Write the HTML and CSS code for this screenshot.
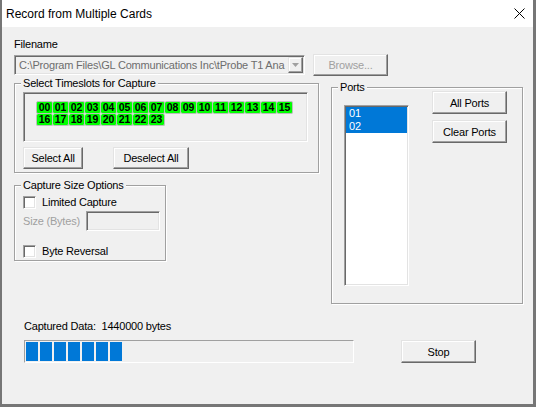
FILE: index.html
```html
<!DOCTYPE html>
<html lang="en">

<head>
    <meta charset="UTF-8">
    <meta name="viewport" content="width=device-width, initial-scale=1.0">
    <title>Record from Multiple Cards</title>
    <link rel="stylesheet" href="styles.css">
</head>

<body>
    <div class="window">
        <div class="titlebar">
            <span class="title">Record from Multiple Cards</span>
            <svg class="close" width="11" height="11" viewBox="0 0 11 11">
                <path d="M0.5 0.5L10.5 10.5M10.5 0.5L0.5 10.5" stroke="#000" stroke-width="1" fill="none" />
            </svg>
        </div>

        <div class="dialog">
            <div class="field-label">Filename</div>
            <div class="file-row">
                <div class="combo sunken">
                    <span class="combo-text">C:\Program Files\GL Communications Inc\tProbe T1 Ana</span>
                    <span class="combo-btn raised">
                        <svg width="7" height="4" viewBox="0 0 7 4">
                            <path d="M0 0H7L3.5 4Z" fill="#a0a0a0" />
                        </svg>
                    </span>
                </div>
                <button class="btn browse" disabled>Browse...</button>
            </div>

            <div class="middle">
                <div class="left-col">
                    <div class="group timeslots">
                        <span class="group-title">Select Timeslots for Capture</span>
                        <div class="slot-box sunken">
                            <div class="slots">
                                <span class="slot">00</span><span class="slot">01</span><span class="slot">02</span><span class="slot">03</span>
                                <span class="slot">04</span><span class="slot">05</span><span class="slot">06</span><span class="slot">07</span>
                                <span class="slot">08</span><span class="slot">09</span><span class="slot">10</span><span class="slot">11</span>
                                <span class="slot">12</span><span class="slot">13</span><span class="slot">14</span><span class="slot">15</span>
                                <span class="slot">16</span><span class="slot">17</span><span class="slot">18</span><span class="slot">19</span>
                                <span class="slot">20</span><span class="slot">21</span><span class="slot">22</span><span class="slot">23</span>
                            </div>
                        </div>
                        <div class="slot-buttons">
                            <button class="btn select-all">Select All</button>
                            <button class="btn deselect-all">Deselect All</button>
                        </div>
                    </div>

                    <div class="group size-options">
                        <span class="group-title">Capture Size Options</span>
                        <label class="check-row"><span class="checkbox sunken"></span>Limited Capture</label>
                        <div class="size-row">
                            <span class="muted">Size (Bytes)</span>
                            <span class="textbox sunken"></span>
                        </div>
                        <label class="check-row byte-rev"><span class="checkbox sunken"></span>Byte Reversal</label>
                    </div>
                </div>

                <div class="group ports">
                    <span class="group-title">Ports</span>
                    <div class="listbox sunken">
                        <div class="item selected">01</div>
                        <div class="item selected">02</div>
                    </div>
                    <div class="port-buttons">
                        <button class="btn port-btn">All Ports</button>
                        <button class="btn port-btn">Clear Ports</button>
                    </div>
                </div>
            </div>

            <div class="captured">Captured Data:&nbsp; 1440000 bytes</div>
            <div class="progress-row">
                <div class="progress">
                    <span class="block"></span><span class="block"></span><span class="block"></span>
                    <span class="block"></span><span class="block"></span><span class="block"></span>
                    <span class="block"></span>
                </div>
                <button class="btn stop">Stop</button>
            </div>
        </div>
    </div>
</body>

</html>
```

FILE: styles.css
```css
body {
    margin: 0;
    font-family: "Liberation Sans", Arial, sans-serif;
    font-size: 11px;
    letter-spacing: -0.2px;
    color: #000;
}

.window {
    box-sizing: border-box;
    width: 536px;
    height: 407px;
    background-color: #f0f0f0;
    border-left: 2px solid #767676;
    border-right: 3px solid #767676;
    border-bottom: 3px solid #767676;
    overflow: hidden;
}

.titlebar {
    height: 27px;
    background-color: #fff;
    display: flex;
    align-items: center;
    justify-content: space-between;
    padding: 0 8px 0 4px;
}

.title {
    font-size: 12px;
    letter-spacing: 0;
}

.close {
    display: block;
}

.dialog {
    padding: 11px 0 0 12px;
}

.field-label {
    line-height: 13px;
}

/* 3d borders */
.sunken {
    box-sizing: border-box;
    border: 1px solid;
    border-color: #a0a0a0 #fff #fff #a0a0a0;
    box-shadow: inset 1px 1px 0 #696969, inset -1px -1px 0 #e3e3e3;
}

.raised {
    box-sizing: border-box;
    border: 1px solid;
    border-color: #e3e3e3 #696969 #696969 #e3e3e3;
    box-shadow: inset -1px -1px 0 #a0a0a0, inset 1px 1px 0 #fff;
    background-color: #f0f0f0;
}

.btn {
    box-sizing: border-box;
    font: inherit;
    letter-spacing: inherit;
    color: #000;
    background-color: #f0f0f0;
    border: 1px solid;
    border-color: #e3e3e3 #696969 #696969 #e3e3e3;
    box-shadow: inset -1px -1px 0 #a0a0a0, inset 1px 1px 0 #fff;
    padding: 0;
    margin: 0;
}

.file-row {
    display: flex;
    align-items: flex-start;
    margin-top: 3px;
}

.combo {
    width: 291px;
    height: 20px;
    margin-top: 1px;
    padding: 1px;
    display: flex;
    align-items: center;
    background-color: #f0f0f0;
}

.combo-text {
    flex: 1;
    padding-left: 3px;
    color: #6d6d6d;
    white-space: nowrap;
}

.combo-btn {
    width: 15px;
    height: 16px;
    display: flex;
    align-items: center;
    justify-content: center;
    flex-shrink: 0;
}

.combo-btn svg {
    display: block;
}

.browse {
    width: 75px;
    height: 22px;
    margin-left: 8px;
    color: #a0a0a0;
}

.middle {
    display: flex;
    align-items: flex-start;
}

.left-col {
    width: 305px;
}

.group {
    position: relative;
    box-sizing: border-box;
    border: 1px solid #a0a0a0;
    box-shadow: inset 1px 1px 0 #fff, 1px 1px 0 #fff;
}

.group-title {
    position: absolute;
    top: -7px;
    left: 6px;
    padding: 0 2px;
    line-height: 13px;
    background-color: #f0f0f0;
}

.timeslots {
    margin-top: 7px;
    height: 90px;
    padding: 8px 0 0 8px;
}

.slot-box {
    width: 285px;
    height: 50px;
    padding: 8px 0 0 12px;
}

.slots {
    display: flex;
    flex-wrap: wrap;
    width: 260px;
}

.slot {
    box-sizing: border-box;
    width: 16px;
    height: 12px;
    border-right: 1px solid #bdbdbd;
    border-bottom: 1px solid #bdbdbd;
    border-radius: 2px;
    background-color: #00ff00;
    font-size: 10.5px;
    font-weight: bold;
    line-height: 11px;
    letter-spacing: -0.1px;
    text-align: center;
}

.slot:nth-child(-n+16) {
    height: 13px;
    border-top: 1px solid #bdbdbd;
}

.slot:nth-child(16n+1) {
    width: 17px;
    border-left: 1px solid #bdbdbd;
}

.slot-buttons {
    display: flex;
    margin-top: 5px;
}

.select-all {
    width: 60px;
    height: 22px;
}

.deselect-all {
    width: 76px;
    height: 22px;
    margin-left: 30px;
}

.size-options {
    margin-top: 12px;
    width: 152px;
    height: 76px;
    padding: 10px 0 0 8px;
}

.check-row {
    display: flex;
    align-items: center;
    height: 13px;
    line-height: 13px;
}

.checkbox {
    width: 13px;
    height: 13px;
    margin-right: 6px;
    background-color: #fff;
}

.size-row {
    display: flex;
    align-items: center;
    height: 20px;
    margin-top: 2px;
}

.muted {
    width: 63px;
    color: #a0a0a0;
}

.textbox {
    width: 74px;
    height: 20px;
    background-color: #f0f0f0;
}

.byte-rev {
    margin-top: 14px;
}

.ports {
    margin: 11px 0 0 12px;
    width: 192px;
    height: 217px;
    padding: 3px 0 0 12px;
    display: flex;
    align-items: flex-start;
}

.listbox {
    width: 65px;
    height: 181px;
    margin-top: 14px;
    padding: 1px;
    background-color: #fff;
}

.item {
    height: 13px;
    line-height: 13px;
    padding-left: 3px;
}

.item.selected {
    background-color: #0078d7;
    color: #fff;
}

.port-buttons {
    display: flex;
    flex-direction: column;
    gap: 6px;
    margin-left: 23px;
}

.port-btn {
    width: 75px;
    height: 23px;
}

.captured {
    margin: 16px 0 0 10px;
    line-height: 13px;
}

.progress-row {
    display: flex;
    margin-top: 7px;
}

.progress {
    box-sizing: border-box;
    margin-left: 10px;
    width: 330px;
    height: 23px;
    padding: 1px;
    border: 1px solid;
    border-color: #a0a0a0 #fff #fff #a0a0a0;
    display: flex;
    gap: 2px;
}

.block {
    width: 12px;
    background-color: #0078d7;
}

.stop {
    width: 75px;
    height: 23px;
    margin-left: 47px;
}
```
